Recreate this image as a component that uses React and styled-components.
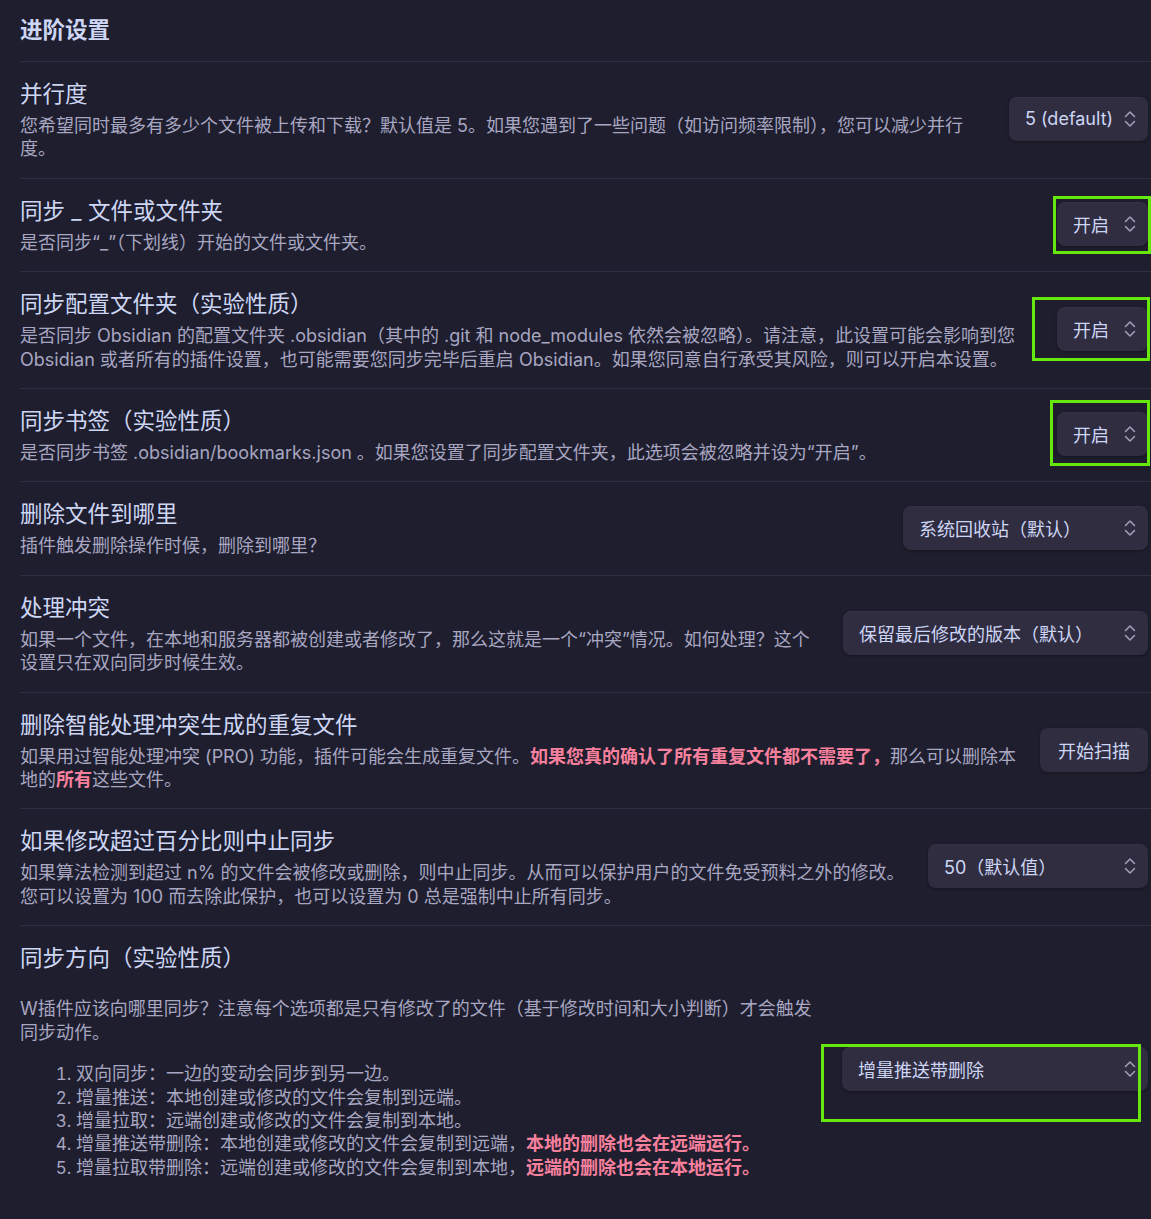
import React from "react";
import styled, { createGlobalStyle } from "styled-components";

const GlobalStyle = createGlobalStyle`
  html, body {
    margin: 0;
    padding: 0;
    background: #1e1e2e;
  }
  body {
    font-family: Inter, "Noto Sans CJK SC", sans-serif;
    color: #cdd6f4;
  }
`;

const Page = styled.div`
  padding-left: 20px;
  min-height: 1219px;
  box-sizing: border-box;
  background: #1e1e2e;
`;

const Heading = styled.div`
  font-size: 22.5px;
  font-weight: 700;
  line-height: 34px;
  padding: 13px 0 14px;
  color: #cdd6f4;
`;

const Item = styled.div`
  display: flex;
  align-items: center;
  border-top: 1px solid #302e42;
  padding: 15px 3px 17px 0;
`;

const Info = styled.div`
  flex: 1 1 auto;
  min-width: 0;
  margin-right: 22px;
`;

const Name = styled.div`
  font-size: 22.5px;
  line-height: 34px;
  color: #cdd6f4;
`;

const Desc = styled.div`
  margin-top: 3px;
  font-size: 18px;
  line-height: 23.4px;
  color: #a8a6c1;

  p {
    margin: 22px 0 18px;
  }
`;

const Warn = styled.b`
  color: #f7809d;
  font-weight: 700;
`;

const StepList = styled.ol`
  margin: 18px 0;
  padding-left: 56px;

  li::marker {
    font-size: 17px;
  }
`;

const Control = styled.div`
  flex: 0 0 auto;
  position: relative;
  display: flex;
  justify-content: flex-end;
`;

const Select = styled.div`
  position: relative;
  width: ${(p) => p.$w}px;
  height: 44px;
  box-sizing: border-box;
  display: flex;
  align-items: center;
  padding: 0 36px 0 16px;
  background: #302d41;
  border-radius: 8px;
  box-shadow: 0 1px 3px rgba(0, 0, 0, 0.35), inset 0 1px 0 rgba(255, 255, 255, 0.03);
  font-size: 18px;
  color: #cdd6f4;
  white-space: nowrap;
`;

const Chevron = styled.svg`
  position: absolute;
  right: 12px;
  top: 50%;
  margin-top: -9px;
`;

const Button = styled.button`
  height: 44px;
  padding: 0 18px;
  background: #302d41;
  border: none;
  border-radius: 8px;
  box-shadow: 0 1px 3px rgba(0, 0, 0, 0.35);
  font-family: Inter, "Noto Sans CJK SC", sans-serif;
  font-size: 18px;
  color: #cdd6f4;
`;

const Highlight = styled.div`
  position: absolute;
  top: ${(p) => p.$t}px;
  right: ${(p) => p.$r}px;
  bottom: ${(p) => p.$b}px;
  left: ${(p) => p.$l}px;
  border: 3px solid #66e80c;
  pointer-events: none;
  z-index: 2;
`;

const Dropdown = ({ w, children }) => (
  <Select $w={w}>
    {children}
    <Chevron width="12" height="18" viewBox="0 0 12 18" fill="none">
      <path
        d="M1.5 6.5 L6 2 L10.5 6.5 M1.5 11.5 L6 16 L10.5 11.5"
        stroke="#a3a1bb"
        strokeWidth="1.5"
        strokeLinecap="round"
        strokeLinejoin="round"
      />
    </Chevron>
  </Select>
);

const Setting = ({ name, children, control }) => (
  <Item>
    <Info>
      <Name>{name}</Name>
      <Desc>{children}</Desc>
    </Info>
    <Control>{control}</Control>
  </Item>
);

export default function App() {
  return (
    <Page>
      <GlobalStyle />
      <Heading>进阶设置</Heading>

      <Setting name="并行度" control={<Dropdown w={139}>5 (default)</Dropdown>}>
        您希望同时最多有多少个文件被上传和下载？默认值是 5。如果您遇到了一些问题（如访问频率限制），您可以减少并行度。
      </Setting>

      <Setting
        name="同步 _ 文件或文件夹"
        control={
          <>
            <Dropdown w={91}>开启</Dropdown>
            <Highlight $t={-6} $r={-3} $b={-8} $l={-4} />
          </>
        }
      >
        是否同步“_”（下划线）开始的文件或文件夹。
      </Setting>

      <Setting
        name="同步配置文件夹（实验性质）"
        control={
          <>
            <Dropdown w={91}>开启</Dropdown>
            <Highlight $t={-10} $r={-2} $b={-10} $l={-25} />
          </>
        }
      >
        是否同步 Obsidian 的配置文件夹 .obsidian（其中的 .git 和 node_modules 依然会被忽略）。请注意，此设置可能会影响到您 Obsidian 或者所有的插件设置，也可能需要您同步完毕后重启 Obsidian。如果您同意自行承受其风险，则可以开启本设置。
      </Setting>

      <Setting
        name="同步书签（实验性质）"
        control={
          <>
            <Dropdown w={91}>开启</Dropdown>
            <Highlight $t={-12} $r={-2} $b={-10} $l={-7} />
          </>
        }
      >
        是否同步书签 .obsidian/bookmarks.json 。如果您设置了同步配置文件夹，此选项会被忽略并设为“开启”。
      </Setting>

      <Setting name="删除文件到哪里" control={<Dropdown w={245}>系统回收站（默认）</Dropdown>}>
        插件触发删除操作时候，删除到哪里？
      </Setting>

      <Setting name="处理冲突" control={<Dropdown w={305}>保留最后修改的版本（默认）</Dropdown>}>
        如果一个文件，在本地和服务器都被创建或者修改了，那么这就是一个“冲突”情况。如何处理？这个设置只在双向同步时候生效。
      </Setting>

      <Setting name="删除智能处理冲突生成的重复文件" control={<Button>开始扫描</Button>}>
        如果用过智能处理冲突 (PRO) 功能，插件可能会生成重复文件。
        <Warn>如果您真的确认了所有重复文件都不需要了，</Warn>
        那么可以删除本地的<Warn>所有</Warn>这些文件。
      </Setting>

      <Setting name="如果修改超过百分比则中止同步" control={<Dropdown w={220}>50（默认值）</Dropdown>}>
        如果算法检测到超过 n% 的文件会被修改或删除，则中止同步。从而可以保护用户的文件免受预料之外的修改。您可以设置为 100 而去除此保护，也可以设置为 0 总是强制中止所有同步。
      </Setting>

      <Setting
        name="同步方向（实验性质）"
        control={
          <>
            <Dropdown w={306}>增量推送带删除</Dropdown>
            <Highlight $t={-3} $r={7} $b={-31} $l={-21} />
          </>
        }
      >
        <p>W插件应该向哪里同步？注意每个选项都是只有修改了的文件（基于修改时间和大小判断）才会触发同步动作。</p>
        <StepList>
          <li>双向同步：一边的变动会同步到另一边。</li>
          <li>增量推送：本地创建或修改的文件会复制到远端。</li>
          <li>增量拉取：远端创建或修改的文件会复制到本地。</li>
          <li>
            增量推送带删除：本地创建或修改的文件会复制到远端，<Warn>本地的删除也会在远端运行。</Warn>
          </li>
          <li>
            增量拉取带删除：远端创建或修改的文件会复制到本地，<Warn>远端的删除也会在本地运行。</Warn>
          </li>
        </StepList>
      </Setting>
    </Page>
  );
}
